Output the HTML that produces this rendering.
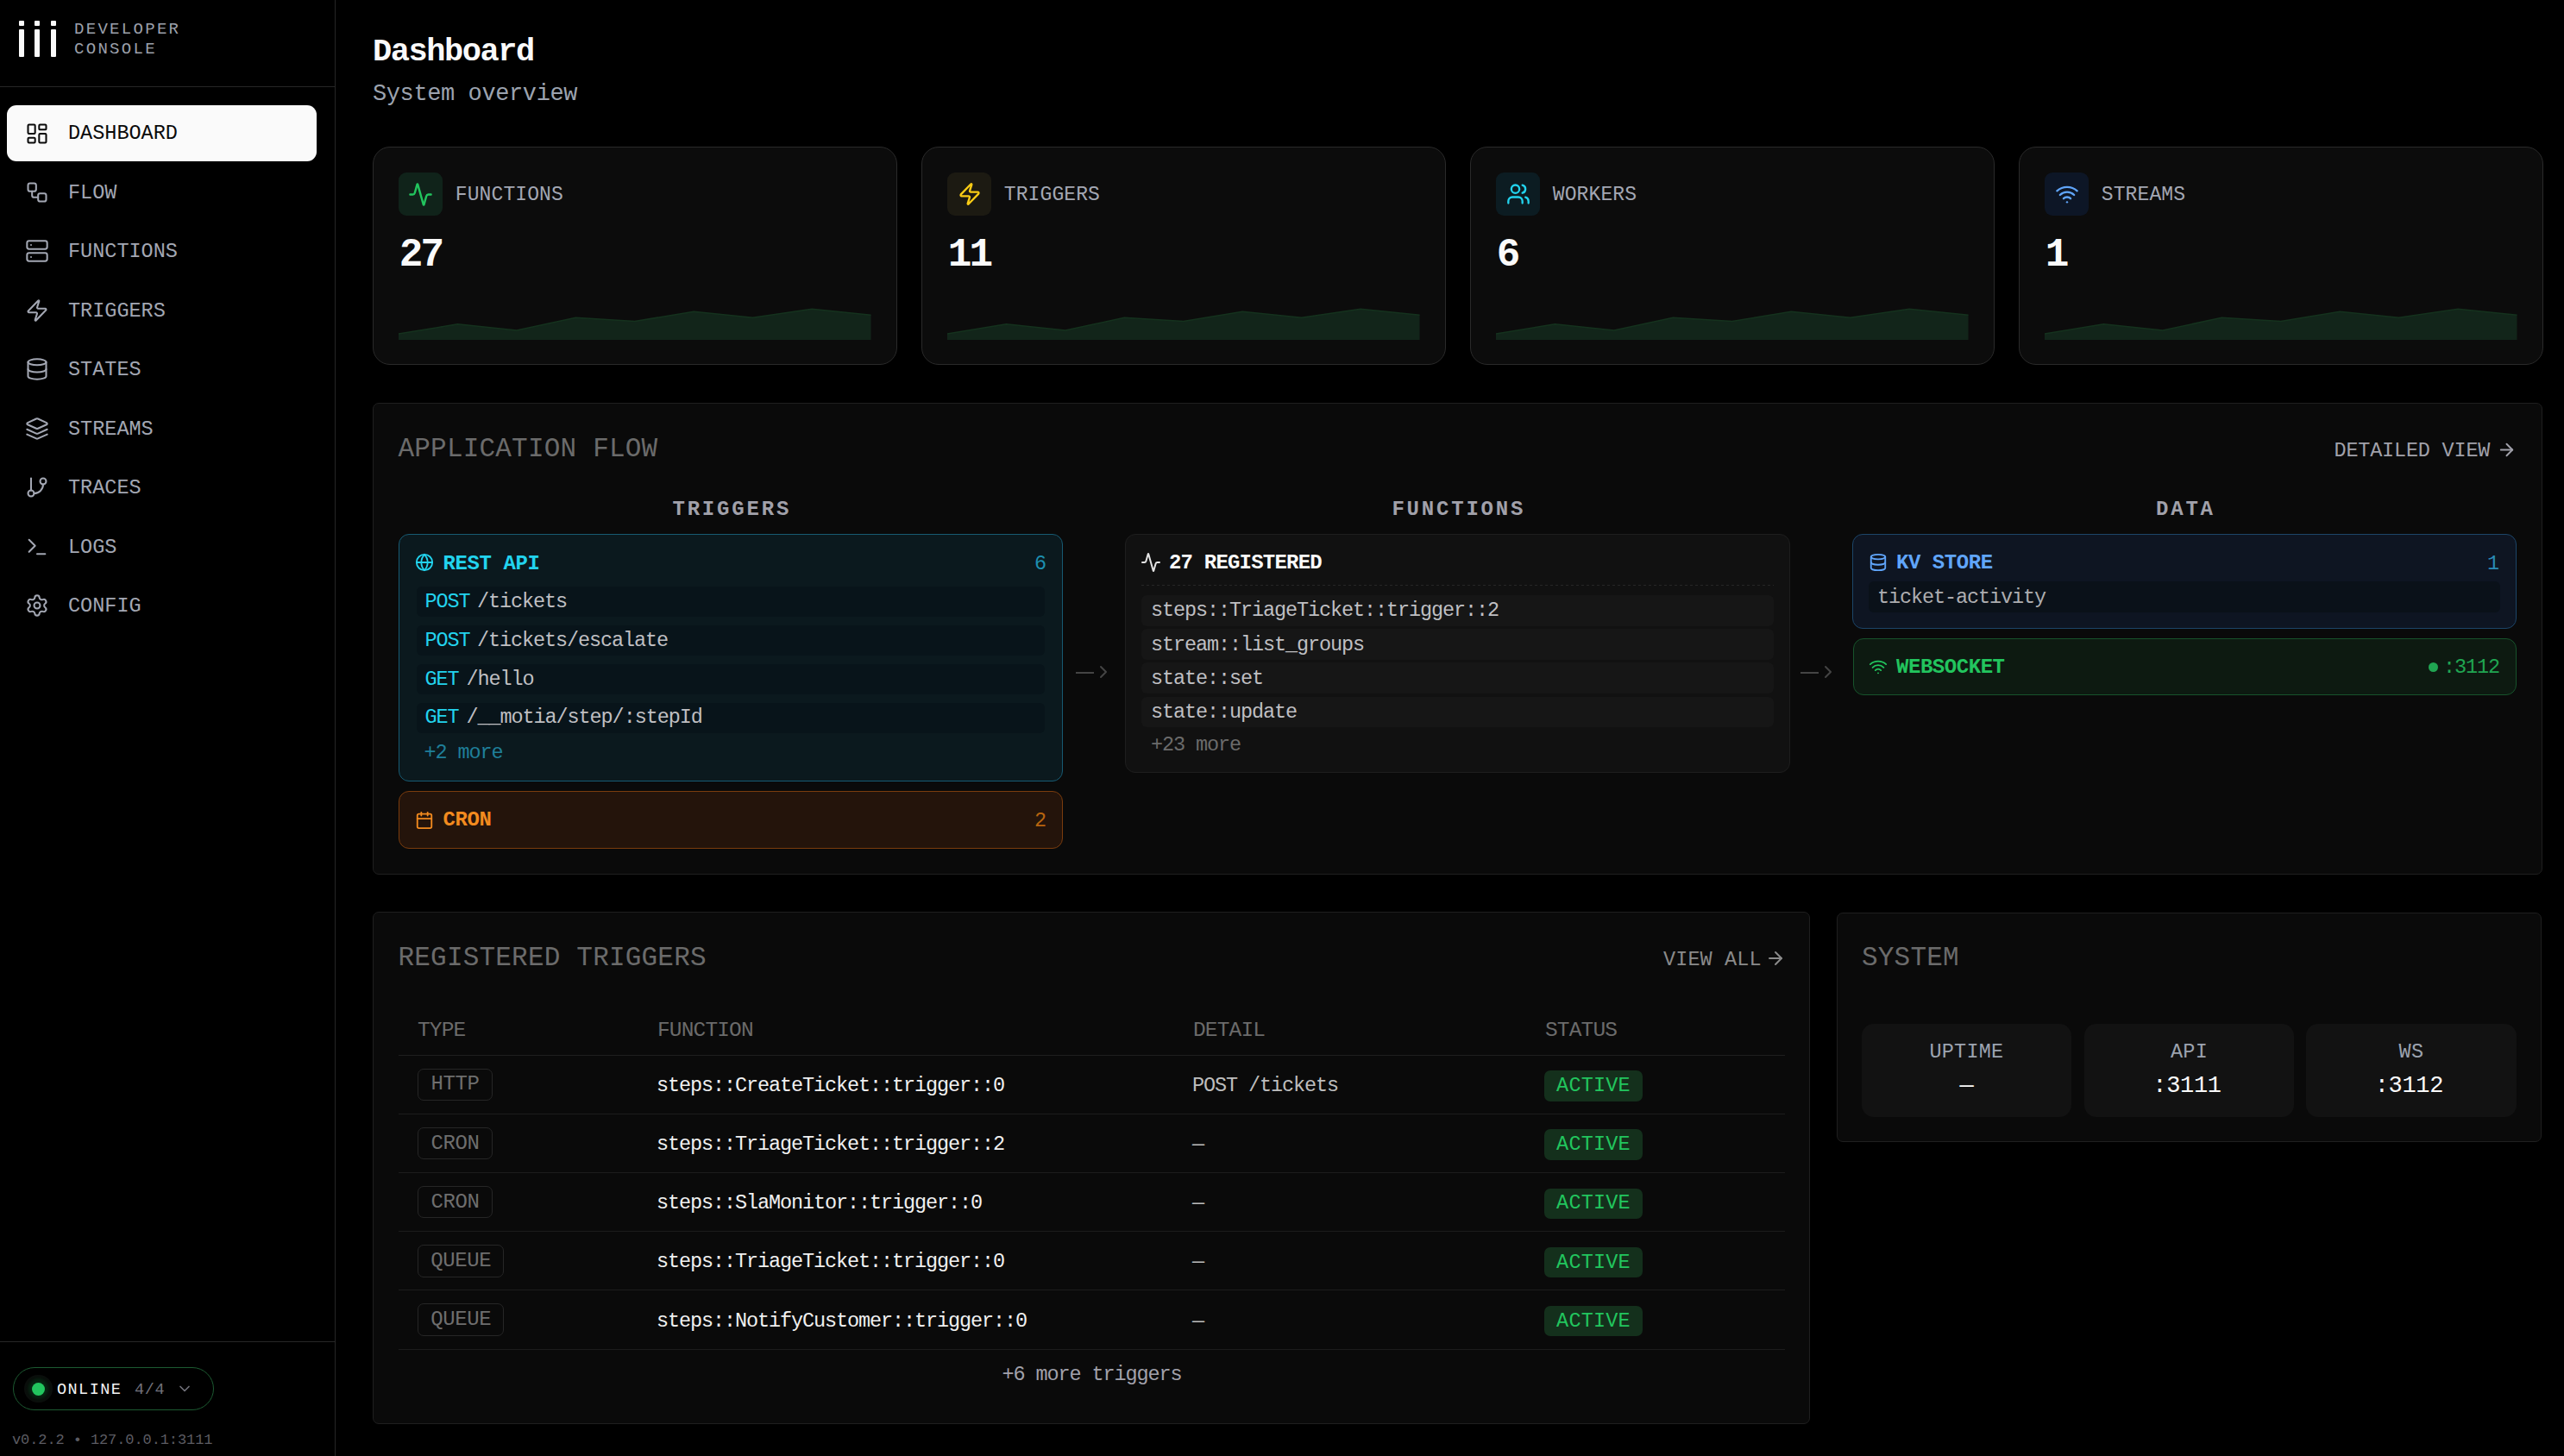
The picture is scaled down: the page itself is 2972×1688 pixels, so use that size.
<!DOCTYPE html>
<html><head><meta charset="utf-8"><style>
html,body{margin:0;padding:0;background:#000;}
body{width:2972px;height:1688px;position:relative;overflow:hidden;font-family:"Liberation Mono", monospace;}
.t{position:absolute;line-height:1;white-space:pre;}
.r{position:absolute;box-sizing:border-box;}
</style></head><body>
<div class="r" style="left:388.0px;top:0.0px;width:1.0px;height:1688.0px;background:#262626;"></div>
<div class="r" style="left:0.0px;top:100.0px;width:388.0px;height:1.0px;background:#262626;"></div>
<div class="r" style="left:22.0px;top:23.7px;width:6.3px;height:6.3px;background:#fafafa;border-radius:1px;"></div>
<div class="r" style="left:22.0px;top:34.3px;width:6.3px;height:31.3px;background:#fafafa;border-radius:1px;"></div>
<div class="r" style="left:40.1px;top:23.7px;width:6.3px;height:6.3px;background:#fafafa;border-radius:1px;"></div>
<div class="r" style="left:40.1px;top:34.3px;width:6.3px;height:31.3px;background:#fafafa;border-radius:1px;"></div>
<div class="r" style="left:59.0px;top:23.7px;width:6.3px;height:6.3px;background:#fafafa;border-radius:1px;"></div>
<div class="r" style="left:59.0px;top:34.3px;width:6.3px;height:31.3px;background:#fafafa;border-radius:1px;"></div>
<div class="t" style="left:86.0px;top:24.5px;font-size:19px;color:#9ca0ab;letter-spacing:2.3px;">DEVELOPER</div>
<div class="t" style="left:86.0px;top:47.5px;font-size:19px;color:#9ca0ab;letter-spacing:2.3px;">CONSOLE</div>
<div class="r" style="left:8.0px;top:122.0px;width:359.0px;height:65.0px;background:#fafafa;border-radius:11px;"></div>
<svg class="r" style="left:28.9px;top:140.5px;" width="28" height="28" viewBox="0 0 24 24" fill="none" stroke="#0a0a0a" stroke-width="1.75" stroke-linecap="round" stroke-linejoin="round"><rect width="7" height="9" x="3" y="3" rx="1"/><rect width="7" height="5" x="14" y="3" rx="1"/><rect width="7" height="9" x="14" y="12" rx="1"/><rect width="7" height="5" x="3" y="16" rx="1"/></svg>
<div class="t" style="left:79.0px;top:143.4px;font-size:23.5px;color:#0a0a0a;">DASHBOARD</div>
<svg class="r" style="left:28.9px;top:208.9px;" width="28" height="28" viewBox="0 0 24 24" fill="none" stroke="#a3a7b3" stroke-width="1.75" stroke-linecap="round" stroke-linejoin="round"><rect width="8" height="8" x="3" y="3" rx="2"/><path d="M7 11v4a2 2 0 0 0 2 2h4"/><rect width="8" height="8" x="13" y="13" rx="2"/></svg>
<div class="t" style="left:79.0px;top:211.8px;font-size:23.5px;color:#a3a7b3;">FLOW</div>
<svg class="r" style="left:28.9px;top:277.4px;" width="28" height="28" viewBox="0 0 24 24" fill="none" stroke="#a3a7b3" stroke-width="1.75" stroke-linecap="round" stroke-linejoin="round"><rect width="20" height="8" x="2" y="2" rx="2" ry="2"/><rect width="20" height="8" x="2" y="14" rx="2" ry="2"/><line x1="6" x2="6.01" y1="6" y2="6"/><line x1="6" x2="6.01" y1="18" y2="18"/></svg>
<div class="t" style="left:79.0px;top:280.3px;font-size:23.5px;color:#a3a7b3;">FUNCTIONS</div>
<svg class="r" style="left:28.9px;top:345.9px;" width="28" height="28" viewBox="0 0 24 24" fill="none" stroke="#a3a7b3" stroke-width="1.75" stroke-linecap="round" stroke-linejoin="round"><path d="M4 14a1 1 0 0 1-.78-1.63l9.9-10.2a.5.5 0 0 1 .86.46l-1.92 6.02A1 1 0 0 0 13 10h7a1 1 0 0 1 .78 1.63l-9.9 10.2a.5.5 0 0 1-.86-.46l1.92-6.02A1 1 0 0 0 11 14z"/></svg>
<div class="t" style="left:79.0px;top:348.7px;font-size:23.5px;color:#a3a7b3;">TRIGGERS</div>
<svg class="r" style="left:28.9px;top:414.3px;" width="28" height="28" viewBox="0 0 24 24" fill="none" stroke="#a3a7b3" stroke-width="1.75" stroke-linecap="round" stroke-linejoin="round"><ellipse cx="12" cy="5" rx="9" ry="3"/><path d="M3 5V19A9 3 0 0 0 21 19V5"/><path d="M3 12A9 3 0 0 0 21 12"/></svg>
<div class="t" style="left:79.0px;top:417.2px;font-size:23.5px;color:#a3a7b3;">STATES</div>
<svg class="r" style="left:28.9px;top:482.8px;" width="28" height="28" viewBox="0 0 24 24" fill="none" stroke="#a3a7b3" stroke-width="1.75" stroke-linecap="round" stroke-linejoin="round"><path d="m12.83 2.18a2 2 0 0 0-1.66 0L2.6 6.08a1 1 0 0 0 0 1.83l8.58 3.91a2 2 0 0 0 1.66 0l8.58-3.9a1 1 0 0 0 0-1.83Z"/><path d="m22 17.65-9.17 4.16a2 2 0 0 1-1.66 0L2 17.65"/><path d="m22 12.65-9.17 4.16a2 2 0 0 1-1.66 0L2 12.65"/></svg>
<div class="t" style="left:79.0px;top:485.6px;font-size:23.5px;color:#a3a7b3;">STREAMS</div>
<svg class="r" style="left:28.9px;top:551.2px;" width="28" height="28" viewBox="0 0 24 24" fill="none" stroke="#a3a7b3" stroke-width="1.75" stroke-linecap="round" stroke-linejoin="round"><line x1="6" x2="6" y1="3" y2="15"/><circle cx="18" cy="6" r="3"/><circle cx="6" cy="18" r="3"/><path d="M18 9a9 9 0 0 1-9 9"/></svg>
<div class="t" style="left:79.0px;top:554.1px;font-size:23.5px;color:#a3a7b3;">TRACES</div>
<svg class="r" style="left:28.9px;top:619.7px;" width="28" height="28" viewBox="0 0 24 24" fill="none" stroke="#a3a7b3" stroke-width="1.75" stroke-linecap="round" stroke-linejoin="round"><polyline points="4 17 10 11 4 5"/><line x1="12" x2="20" y1="19" y2="19"/></svg>
<div class="t" style="left:79.0px;top:622.5px;font-size:23.5px;color:#a3a7b3;">LOGS</div>
<svg class="r" style="left:28.9px;top:688.1px;" width="28" height="28" viewBox="0 0 24 24" fill="none" stroke="#a3a7b3" stroke-width="1.75" stroke-linecap="round" stroke-linejoin="round"><path d="M9.671 4.136a2.34 2.34 0 0 1 4.659 0 2.34 2.34 0 0 0 3.319 1.915 2.34 2.34 0 0 1 2.33 4.033 2.34 2.34 0 0 0 0 3.831 2.34 2.34 0 0 1-2.33 4.033 2.34 2.34 0 0 0-3.319 1.915 2.34 2.34 0 0 1-4.659 0 2.34 2.34 0 0 0-3.32-1.915 2.34 2.34 0 0 1-2.33-4.033 2.34 2.34 0 0 0 0-3.831A2.34 2.34 0 0 1 6.35 6.051a2.34 2.34 0 0 0 3.319-1.915"/><circle cx="12" cy="12" r="3"/></svg>
<div class="t" style="left:79.0px;top:691.0px;font-size:23.5px;color:#a3a7b3;">CONFIG</div>
<div class="r" style="left:0.0px;top:1555.0px;width:388.0px;height:1.0px;background:#262626;"></div>
<div class="r" style="left:15.0px;top:1585.0px;width:233.0px;height:50.0px;border:1px solid #1c5a31;border-radius:25px;"></div>
<div class="r" style="left:28.3px;top:1593.8px;width:32.4px;height:32.4px;background:radial-gradient(circle, rgba(34,197,94,0.18) 0 40%, rgba(30,60,40,0.25) 58%, rgba(24,24,24,0.5) 78%, rgba(0,0,0,0) 100%);border-radius:50%;"></div>
<div class="r" style="left:37.0px;top:1602.5px;width:15.0px;height:15.0px;background:#22c55e;border-radius:50%;"></div>
<div class="t" style="left:66.0px;top:1602.8px;font-size:18.5px;color:#f4f4f5;letter-spacing:1.45px;">ONLINE</div>
<div class="t" style="left:156.0px;top:1602.8px;font-size:18.5px;color:#71717a;letter-spacing:0.65px;">4/4</div>
<svg class="r" style="left:203.7px;top:1600.0px;" width="20" height="20" viewBox="0 0 24 24" fill="none" stroke="#71717a" stroke-width="2" stroke-linecap="round" stroke-linejoin="round"><path d="m6 9 6 6 6-6"/></svg>
<div class="t" style="left:14.0px;top:1660.7px;font-size:17px;color:#5c5c63;letter-spacing:-0.1px;">v0.2.2 • 127.0.0.1:3111</div>
<div class="t" style="left:432.0px;top:41.9px;font-size:37px;color:#fafafa;letter-spacing:-1.45px;font-weight:700;">Dashboard</div>
<div class="t" style="left:432.0px;top:96.3px;font-size:27px;color:#9ca3af;letter-spacing:-0.4px;">System overview</div>
<div class="r" style="left:432.0px;top:169.6px;width:607.5px;height:253.8px;background:#0c0c0c;border:1px solid #2a2a2a;border-radius:20px;"></div>
<div class="r" style="left:462.3px;top:200.0px;width:50.6px;height:50.0px;background:#10231a;border-radius:9px;"></div>
<svg class="r" style="left:473.1px;top:210.8px;" width="29" height="29" viewBox="0 0 24 24" fill="none" stroke="#22c55e" stroke-width="2" stroke-linecap="round" stroke-linejoin="round"><path d="M22 12h-2.48a2 2 0 0 0-1.93 1.46l-2.35 8.36a.25.25 0 0 1-.48 0L9.24 2.18a.25.25 0 0 0-.48 0l-2.35 8.36A2 2 0 0 1 4.49 12H2"/></svg>
<div class="t" style="left:527.8px;top:214.5px;font-size:23px;color:#a3a7b3;letter-spacing:0.1px;">FUNCTIONS</div>
<div class="t" style="left:462.8px;top:272.8px;font-size:46px;color:#fafafa;letter-spacing:-3px;font-weight:700;">27</div>
<svg class="r" style="left:462.3px;top:353.8px" width="547.5" height="40" viewBox="0 0 547.5 40"><polygon points="0,40 0.0,33.0 68.4,21.8 136.9,29.1 205.3,14.2 273.8,18.5 342.2,7.3 410.6,14.2 479.1,4.3 547.5,11.2 547.5,40" fill="#12251a"/><polyline points="0.0,33.0 68.4,21.8 136.9,29.1 205.3,14.2 273.8,18.5 342.2,7.3 410.6,14.2 479.1,4.3 547.5,11.2" fill="none" stroke="#15321e" stroke-width="1.5"/></svg>
<div class="r" style="left:1068.0px;top:169.6px;width:607.5px;height:253.8px;background:#0c0c0c;border:1px solid #2a2a2a;border-radius:20px;"></div>
<div class="r" style="left:1098.3px;top:200.0px;width:50.6px;height:50.0px;background:#1c1a12;border-radius:9px;"></div>
<svg class="r" style="left:1109.6px;top:211.3px;" width="28" height="28" viewBox="0 0 24 24" fill="none" stroke="#facc15" stroke-width="2" stroke-linecap="round" stroke-linejoin="round"><path d="M4 14a1 1 0 0 1-.78-1.63l9.9-10.2a.5.5 0 0 1 .86.46l-1.92 6.02A1 1 0 0 0 13 10h7a1 1 0 0 1 .78 1.63l-9.9 10.2a.5.5 0 0 1-.86-.46l1.92-6.02A1 1 0 0 0 11 14z"/></svg>
<div class="t" style="left:1163.8px;top:214.5px;font-size:23px;color:#a3a7b3;letter-spacing:0.1px;">TRIGGERS</div>
<div class="t" style="left:1098.8px;top:272.8px;font-size:46px;color:#fafafa;letter-spacing:-3px;font-weight:700;">11</div>
<svg class="r" style="left:1098.3px;top:353.8px" width="547.5" height="40" viewBox="0 0 547.5 40"><polygon points="0,40 0.0,33.0 68.4,21.8 136.9,29.1 205.3,14.2 273.8,18.5 342.2,7.3 410.6,14.2 479.1,4.3 547.5,11.2 547.5,40" fill="#12251a"/><polyline points="0.0,33.0 68.4,21.8 136.9,29.1 205.3,14.2 273.8,18.5 342.2,7.3 410.6,14.2 479.1,4.3 547.5,11.2" fill="none" stroke="#15321e" stroke-width="1.5"/></svg>
<div class="r" style="left:1704.0px;top:169.6px;width:607.5px;height:253.8px;background:#0c0c0c;border:1px solid #2a2a2a;border-radius:20px;"></div>
<div class="r" style="left:1734.3px;top:200.0px;width:50.6px;height:50.0px;background:#0c1c22;border-radius:9px;"></div>
<svg class="r" style="left:1745.6px;top:211.3px;" width="28" height="28" viewBox="0 0 24 24" fill="none" stroke="#22d3ee" stroke-width="2" stroke-linecap="round" stroke-linejoin="round"><path d="M16 21v-2a4 4 0 0 0-4-4H6a4 4 0 0 0-4 4v2"/><circle cx="9" cy="7" r="4"/><path d="M22 21v-2a4 4 0 0 0-3-3.87"/><path d="M16 3.13a4 4 0 0 1 0 7.75"/></svg>
<div class="t" style="left:1799.8px;top:214.5px;font-size:23px;color:#a3a7b3;letter-spacing:0.1px;">WORKERS</div>
<div class="t" style="left:1734.8px;top:272.8px;font-size:46px;color:#fafafa;letter-spacing:-3px;font-weight:700;">6</div>
<svg class="r" style="left:1734.3px;top:353.8px" width="547.5" height="40" viewBox="0 0 547.5 40"><polygon points="0,40 0.0,33.0 68.4,21.8 136.9,29.1 205.3,14.2 273.8,18.5 342.2,7.3 410.6,14.2 479.1,4.3 547.5,11.2 547.5,40" fill="#12251a"/><polyline points="0.0,33.0 68.4,21.8 136.9,29.1 205.3,14.2 273.8,18.5 342.2,7.3 410.6,14.2 479.1,4.3 547.5,11.2" fill="none" stroke="#15321e" stroke-width="1.5"/></svg>
<div class="r" style="left:2340.0px;top:169.6px;width:607.5px;height:253.8px;background:#0c0c0c;border:1px solid #2a2a2a;border-radius:20px;"></div>
<div class="r" style="left:2370.3px;top:200.0px;width:50.6px;height:50.0px;background:#0d1626;border-radius:9px;"></div>
<svg class="r" style="left:2381.6px;top:211.3px;" width="28" height="28" viewBox="0 0 24 24" fill="none" stroke="#60a5fa" stroke-width="2" stroke-linecap="round" stroke-linejoin="round"><path d="M12 20h.01"/><path d="M2 8.82a15 15 0 0 1 20 0"/><path d="M5 12.859a10 10 0 0 1 14 0"/><path d="M8.5 16.429a5 5 0 0 1 7 0"/></svg>
<div class="t" style="left:2435.8px;top:214.5px;font-size:23px;color:#a3a7b3;letter-spacing:0.1px;">STREAMS</div>
<div class="t" style="left:2370.8px;top:272.8px;font-size:46px;color:#fafafa;letter-spacing:-3px;font-weight:700;">1</div>
<svg class="r" style="left:2370.3px;top:353.8px" width="547.5" height="40" viewBox="0 0 547.5 40"><polygon points="0,40 0.0,33.0 68.4,21.8 136.9,29.1 205.3,14.2 273.8,18.5 342.2,7.3 410.6,14.2 479.1,4.3 547.5,11.2 547.5,40" fill="#12251a"/><polyline points="0.0,33.0 68.4,21.8 136.9,29.1 205.3,14.2 273.8,18.5 342.2,7.3 410.6,14.2 479.1,4.3 547.5,11.2" fill="none" stroke="#15321e" stroke-width="1.5"/></svg>
<div class="r" style="left:432.4px;top:467.2px;width:2514.6px;height:546.8px;background:#0a0a0a;border:1px solid #1f1f1f;border-radius:7px;"></div>
<div class="t" style="left:461.5px;top:504.5px;font-size:31px;color:#6b6b6b;letter-spacing:0.2px;">APPLICATION FLOW</div>
<div class="t" style="left:2705.5px;top:511.3px;font-size:23.5px;color:#a1a1aa;letter-spacing:-0.2px;">DETAILED VIEW</div>
<svg class="r" style="left:2894.2px;top:510.1px;" width="23" height="23" viewBox="0 0 24 24" fill="none" stroke="#a1a1aa" stroke-width="2" stroke-linecap="round" stroke-linejoin="round"><path d="M5 12h14"/><path d="m12 5 7 7-7 7"/></svg>
<div class="t" style="left:346.9px;top:579.1px;font-size:24px;color:#a1a1aa;letter-spacing:2.8px;font-weight:700;width:1000px;text-align:center;text-indent:2.8px;">TRIGGERS</div>
<div class="t" style="left:1189.4px;top:579.1px;font-size:24px;color:#a1a1aa;letter-spacing:2.8px;font-weight:700;width:1000px;text-align:center;text-indent:2.8px;">FUNCTIONS</div>
<div class="t" style="left:2032.0px;top:579.1px;font-size:24px;color:#a1a1aa;letter-spacing:2.8px;font-weight:700;width:1000px;text-align:center;text-indent:2.8px;">DATA</div>
<div class="r" style="left:461.8px;top:618.5px;width:770.1px;height:287.2px;background:#0b191e;border:1px solid #175a72;border-radius:12px;"></div>
<svg class="r" style="left:481.0px;top:641.4px;" width="22" height="22" viewBox="0 0 24 24" fill="none" stroke="#22d3ee" stroke-width="2" stroke-linecap="round" stroke-linejoin="round"><circle cx="12" cy="12" r="10"/><path d="M12 2a14.5 14.5 0 0 0 0 20 14.5 14.5 0 0 0 0-20"/><path d="M2 12h20"/></svg>
<div class="t" style="left:513.5px;top:641.8px;font-size:24px;color:#22d3ee;letter-spacing:-0.4px;font-weight:700;">REST API</div>
<div class="t" style="right:1759.0px;top:642.2px;font-size:23.5px;color:#1d8fb0;">6</div>
<div class="r" style="left:482.6px;top:680.0px;width:728.4px;height:35.0px;background:#08141a;border-radius:6px;"></div>
<div class="t" style="left:492.5px;top:685.6px;font-size:23.5px;color:#22d3ee;letter-spacing:-1.1px;">POST</div>
<div class="t" style="left:553.0px;top:685.6px;font-size:23.5px;color:#bfbfc2;letter-spacing:-1.1px;">/tickets</div>
<div class="r" style="left:482.6px;top:724.9px;width:728.4px;height:35.0px;background:#08141a;border-radius:6px;"></div>
<div class="t" style="left:492.5px;top:730.5px;font-size:23.5px;color:#22d3ee;letter-spacing:-1.1px;">POST</div>
<div class="t" style="left:553.0px;top:730.5px;font-size:23.5px;color:#bfbfc2;letter-spacing:-1.1px;">/tickets/escalate</div>
<div class="r" style="left:482.6px;top:769.9px;width:728.4px;height:35.0px;background:#08141a;border-radius:6px;"></div>
<div class="t" style="left:492.5px;top:775.5px;font-size:23.5px;color:#22d3ee;letter-spacing:-1.1px;">GET</div>
<div class="t" style="left:540.6px;top:775.5px;font-size:23.5px;color:#bfbfc2;letter-spacing:-1.1px;">/hello</div>
<div class="r" style="left:482.6px;top:814.8px;width:728.4px;height:35.0px;background:#08141a;border-radius:6px;"></div>
<div class="t" style="left:492.5px;top:820.4px;font-size:23.5px;color:#22d3ee;letter-spacing:-1.1px;">GET</div>
<div class="t" style="left:540.6px;top:820.4px;font-size:23.5px;color:#bfbfc2;letter-spacing:-1.1px;">/__motia/step/:stepId</div>
<div class="t" style="left:491.5px;top:861.4px;font-size:23.5px;color:#1f7f99;letter-spacing:-1.1px;">+2 more</div>
<div class="r" style="left:461.8px;top:916.5px;width:770.1px;height:67.0px;background:#24140b;border:1px solid #7a3c0d;border-radius:12px;"></div>
<svg class="r" style="left:481.0px;top:939.5px;" width="22" height="22" viewBox="0 0 24 24" fill="none" stroke="#f38b1f" stroke-width="2" stroke-linecap="round" stroke-linejoin="round"><path d="M8 2v4"/><path d="M16 2v4"/><rect width="18" height="18" x="3" y="4" rx="2"/><path d="M3 10h18"/></svg>
<div class="t" style="left:513.5px;top:939.3px;font-size:24px;color:#f38b1f;letter-spacing:-0.4px;font-weight:700;">CRON</div>
<div class="t" style="right:1759.0px;top:939.7px;font-size:23.5px;color:#b8650f;">2</div>
<div class="r" style="left:1247.0px;top:779.0px;width:21.0px;height:2.0px;background:#444;"></div>
<svg class="r" style="left:1267.4px;top:767.4px;" width="24" height="24" viewBox="0 0 24 24" fill="none" stroke="#444" stroke-width="2" stroke-linecap="round" stroke-linejoin="round"><path d="m9 6 6 6-6 6"/></svg>
<div class="r" style="left:2087.0px;top:779.0px;width:21.0px;height:2.0px;background:#444;"></div>
<svg class="r" style="left:2107.4px;top:767.4px;" width="24" height="24" viewBox="0 0 24 24" fill="none" stroke="#444" stroke-width="2" stroke-linecap="round" stroke-linejoin="round"><path d="m9 6 6 6-6 6"/></svg>
<div class="r" style="left:1303.9px;top:618.9px;width:770.8px;height:276.9px;background:#111111;border:1px solid #1e1e1e;border-radius:12px;"></div>
<svg class="r" style="left:1322.3px;top:639.5px;" width="24" height="24" viewBox="0 0 24 24" fill="none" stroke="#e5e5e5" stroke-width="2" stroke-linecap="round" stroke-linejoin="round"><path d="M22 12h-2.48a2 2 0 0 0-1.93 1.46l-2.35 8.36a.25.25 0 0 1-.48 0L9.24 2.18a.25.25 0 0 0-.48 0l-2.35 8.36A2 2 0 0 1 4.49 12H2"/></svg>
<div class="t" style="left:1355.0px;top:641.0px;font-size:24px;color:#fafafa;letter-spacing:-0.8px;font-weight:700;">27 REGISTERED</div>
<div class="r" style="left:1323.3px;top:677.5px;width:733.0px;height:1.2px;background:repeating-linear-gradient(90deg,#262626 0 3px,transparent 3px 6px);"></div>
<div class="r" style="left:1323.3px;top:690.0px;width:733.0px;height:35.5px;background:#161616;border-radius:6px;"></div>
<div class="t" style="left:1334.0px;top:696.4px;font-size:23.5px;color:#bfbfc2;letter-spacing:-1.1px;">steps::TriageTicket::trigger::2</div>
<div class="r" style="left:1323.3px;top:729.2px;width:733.0px;height:35.5px;background:#161616;border-radius:6px;"></div>
<div class="t" style="left:1334.0px;top:735.6px;font-size:23.5px;color:#bfbfc2;letter-spacing:-1.1px;">stream::list_groups</div>
<div class="r" style="left:1323.3px;top:768.4px;width:733.0px;height:35.5px;background:#161616;border-radius:6px;"></div>
<div class="t" style="left:1334.0px;top:774.8px;font-size:23.5px;color:#bfbfc2;letter-spacing:-1.1px;">state::set</div>
<div class="r" style="left:1323.3px;top:807.6px;width:733.0px;height:35.5px;background:#161616;border-radius:6px;"></div>
<div class="t" style="left:1334.0px;top:814.0px;font-size:23.5px;color:#bfbfc2;letter-spacing:-1.1px;">state::update</div>
<div class="t" style="left:1334.0px;top:851.5px;font-size:23.5px;color:#6b6b6b;letter-spacing:-1.1px;">+23 more</div>
<div class="r" style="left:2147.0px;top:619.0px;width:770.1px;height:110.0px;background:#0e1522;border:1px solid #1c4568;border-radius:12px;"></div>
<svg class="r" style="left:2165.5px;top:641.0px;" width="22" height="22" viewBox="0 0 24 24" fill="none" stroke="#60a5fa" stroke-width="2" stroke-linecap="round" stroke-linejoin="round"><ellipse cx="12" cy="5" rx="9" ry="3"/><path d="M3 5V19A9 3 0 0 0 21 19V5"/><path d="M3 12A9 3 0 0 0 21 12"/></svg>
<div class="t" style="left:2198.0px;top:641.2px;font-size:24px;color:#60a5fa;letter-spacing:-0.45px;font-weight:700;">KV STORE</div>
<div class="t" style="right:75.0px;top:641.6px;font-size:23.5px;color:#2a8ab5;">1</div>
<div class="r" style="left:2166.0px;top:673.8px;width:731.8px;height:36.2px;background:#0a1119;border-radius:6px;"></div>
<div class="t" style="left:2176.0px;top:680.8px;font-size:23.5px;color:#adadb0;letter-spacing:-1.1px;">ticket-activity</div>
<div class="r" style="left:2147.5px;top:740.4px;width:769.1px;height:65.8px;background:#0d1a11;border:1px solid #17532b;border-radius:12px;"></div>
<svg class="r" style="left:2165.5px;top:762.0px;" width="22" height="22" viewBox="0 0 24 24" fill="none" stroke="#22c55e" stroke-width="2" stroke-linecap="round" stroke-linejoin="round"><path d="M12 20h.01"/><path d="M2 8.82a15 15 0 0 1 20 0"/><path d="M5 12.859a10 10 0 0 1 14 0"/><path d="M8.5 16.429a5 5 0 0 1 7 0"/></svg>
<div class="t" style="left:2198.0px;top:761.6px;font-size:24px;color:#22c55e;letter-spacing:-0.45px;font-weight:700;">WEBSOCKET</div>
<div class="r" style="left:2814.7px;top:768.1px;width:11.2px;height:11.2px;background:#20a552;border-radius:50%;"></div>
<div class="t" style="right:75.0px;top:762.0px;font-size:23.5px;color:#20a552;letter-spacing:-1.1px;">:3112</div>
<div class="r" style="left:432.4px;top:1057.2px;width:1666.1px;height:594.0px;background:#0a0a0a;border:1px solid #1f1f1f;border-radius:7px;"></div>
<div class="t" style="left:461.5px;top:1094.6px;font-size:31px;color:#6b6b6b;letter-spacing:0.2px;">REGISTERED TRIGGERS</div>
<div class="t" style="left:1928.0px;top:1100.6px;font-size:23.5px;color:#8a8a8a;letter-spacing:0.1px;">VIEW ALL</div>
<svg class="r" style="left:2046.2px;top:1099.0px;" width="24" height="24" viewBox="0 0 24 24" fill="none" stroke="#8a8a8a" stroke-width="2" stroke-linecap="round" stroke-linejoin="round"><path d="M5 12h14"/><path d="m12 5 7 7-7 7"/></svg>
<div class="t" style="left:484.0px;top:1182.5px;font-size:24.5px;color:#6b6b6b;letter-spacing:-0.85px;">TYPE</div>
<div class="t" style="left:762.0px;top:1182.5px;font-size:24.5px;color:#6b6b6b;letter-spacing:-0.85px;">FUNCTION</div>
<div class="t" style="left:1383.0px;top:1182.5px;font-size:24.5px;color:#6b6b6b;letter-spacing:-0.85px;">DETAIL</div>
<div class="t" style="left:1791.0px;top:1182.5px;font-size:24.5px;color:#6b6b6b;letter-spacing:-0.85px;">STATUS</div>
<div class="r" style="left:461.9px;top:1222.8px;width:1607.1px;height:1.5px;background:#1f1f1f;"></div>
<div class="r" style="left:484.2px;top:1238.7px;width:86.5px;height:37.4px;border:1px solid #262626;border-radius:7px;"></div>
<div class="t" style="left:484.2px;top:1245.4px;width:86.5px;text-align:center;font-size:24px;line-height:24px;color:#6e6e6e;letter-spacing:-0.4px">HTTP</div>
<div class="t" style="left:761.0px;top:1246.9px;font-size:23.5px;color:#f0f0f0;letter-spacing:-1.1px;">steps::CreateTicket::trigger::0</div>
<div class="t" style="left:1382.0px;top:1246.9px;font-size:23.5px;color:#bdbdbd;letter-spacing:-1.1px;">POST /tickets</div>
<div class="r" style="left:1790.2px;top:1241.2px;width:113.7px;height:35.4px;background:#14301c;border-radius:7px;"></div>
<div class="t" style="left:1790.2px;top:1247.1px;width:113.7px;text-align:center;font-size:23.5px;line-height:24px;color:#22c55e;letter-spacing:0.2px">ACTIVE</div>
<div class="r" style="left:461.9px;top:1291.0px;width:1607.1px;height:1.0px;background:#1c1c1c;"></div>
<div class="r" style="left:484.2px;top:1306.8px;width:86.5px;height:37.4px;border:1px solid #262626;border-radius:7px;"></div>
<div class="t" style="left:484.2px;top:1313.5px;width:86.5px;text-align:center;font-size:24px;line-height:24px;color:#6e6e6e;letter-spacing:-0.4px">CRON</div>
<div class="t" style="left:761.0px;top:1315.0px;font-size:23.5px;color:#f0f0f0;letter-spacing:-1.1px;">steps::TriageTicket::trigger::2</div>
<div class="t" style="left:1382.0px;top:1315.0px;font-size:23.5px;color:#bdbdbd;letter-spacing:-1.1px;">—</div>
<div class="r" style="left:1790.2px;top:1309.3px;width:113.7px;height:35.4px;background:#14301c;border-radius:7px;"></div>
<div class="t" style="left:1790.2px;top:1315.2px;width:113.7px;text-align:center;font-size:23.5px;line-height:24px;color:#22c55e;letter-spacing:0.2px">ACTIVE</div>
<div class="r" style="left:461.9px;top:1359.1px;width:1607.1px;height:1.0px;background:#1c1c1c;"></div>
<div class="r" style="left:484.2px;top:1375.0px;width:86.5px;height:37.4px;border:1px solid #262626;border-radius:7px;"></div>
<div class="t" style="left:484.2px;top:1381.7px;width:86.5px;text-align:center;font-size:24px;line-height:24px;color:#6e6e6e;letter-spacing:-0.4px">CRON</div>
<div class="t" style="left:761.0px;top:1383.2px;font-size:23.5px;color:#f0f0f0;letter-spacing:-1.1px;">steps::SlaMonitor::trigger::0</div>
<div class="t" style="left:1382.0px;top:1383.2px;font-size:23.5px;color:#bdbdbd;letter-spacing:-1.1px;">—</div>
<div class="r" style="left:1790.2px;top:1377.5px;width:113.7px;height:35.4px;background:#14301c;border-radius:7px;"></div>
<div class="t" style="left:1790.2px;top:1383.4px;width:113.7px;text-align:center;font-size:23.5px;line-height:24px;color:#22c55e;letter-spacing:0.2px">ACTIVE</div>
<div class="r" style="left:461.9px;top:1427.3px;width:1607.1px;height:1.0px;background:#1c1c1c;"></div>
<div class="r" style="left:484.2px;top:1443.2px;width:100.3px;height:37.4px;border:1px solid #262626;border-radius:7px;"></div>
<div class="t" style="left:484.2px;top:1449.9px;width:100.3px;text-align:center;font-size:24px;line-height:24px;color:#6e6e6e;letter-spacing:-0.4px">QUEUE</div>
<div class="t" style="left:761.0px;top:1451.4px;font-size:23.5px;color:#f0f0f0;letter-spacing:-1.1px;">steps::TriageTicket::trigger::0</div>
<div class="t" style="left:1382.0px;top:1451.4px;font-size:23.5px;color:#bdbdbd;letter-spacing:-1.1px;">—</div>
<div class="r" style="left:1790.2px;top:1445.7px;width:113.7px;height:35.4px;background:#14301c;border-radius:7px;"></div>
<div class="t" style="left:1790.2px;top:1451.6px;width:113.7px;text-align:center;font-size:23.5px;line-height:24px;color:#22c55e;letter-spacing:0.2px">ACTIVE</div>
<div class="r" style="left:461.9px;top:1495.4px;width:1607.1px;height:1.0px;background:#1c1c1c;"></div>
<div class="r" style="left:484.2px;top:1511.3px;width:100.3px;height:37.4px;border:1px solid #262626;border-radius:7px;"></div>
<div class="t" style="left:484.2px;top:1518.0px;width:100.3px;text-align:center;font-size:24px;line-height:24px;color:#6e6e6e;letter-spacing:-0.4px">QUEUE</div>
<div class="t" style="left:761.0px;top:1519.5px;font-size:23.5px;color:#f0f0f0;letter-spacing:-1.1px;">steps::NotifyCustomer::trigger::0</div>
<div class="t" style="left:1382.0px;top:1519.5px;font-size:23.5px;color:#bdbdbd;letter-spacing:-1.1px;">—</div>
<div class="r" style="left:1790.2px;top:1513.8px;width:113.7px;height:35.4px;background:#14301c;border-radius:7px;"></div>
<div class="t" style="left:1790.2px;top:1519.7px;width:113.7px;text-align:center;font-size:23.5px;line-height:24px;color:#22c55e;letter-spacing:0.2px">ACTIVE</div>
<div class="r" style="left:461.9px;top:1563.6px;width:1607.1px;height:1.0px;background:#1c1c1c;"></div>
<div class="t" style="left:765.5px;top:1582.0px;font-size:23.5px;color:#a1a1aa;letter-spacing:-1.1px;width:1000px;text-align:center;">+6 more triggers</div>
<div class="r" style="left:2128.5px;top:1057.5px;width:817.9px;height:266.6px;background:#0a0a0a;border:1px solid #1f1f1f;border-radius:7px;"></div>
<div class="t" style="left:2158.0px;top:1094.6px;font-size:31px;color:#6b6b6b;letter-spacing:0.2px;">SYSTEM</div>
<div class="r" style="left:2158.0px;top:1187.0px;width:242.8px;height:107.5px;background:#121212;border-radius:14px;"></div>
<div class="t" style="left:1779.4px;top:1207.9px;font-size:23.5px;color:#9ca3af;letter-spacing:0.2px;width:1000px;text-align:center;">UPTIME</div>
<div class="t" style="left:1779.4px;top:1246.2px;font-size:27px;color:#fafafa;letter-spacing:-0.3px;width:1000px;text-align:center;">—</div>
<div class="r" style="left:2416.0px;top:1187.0px;width:243.0px;height:107.5px;background:#121212;border-radius:14px;"></div>
<div class="t" style="left:2037.5px;top:1207.9px;font-size:23.5px;color:#9ca3af;letter-spacing:0.2px;width:1000px;text-align:center;">API</div>
<div class="t" style="left:2035.0px;top:1246.2px;font-size:27px;color:#fafafa;letter-spacing:-0.3px;width:1000px;text-align:center;">:3111</div>
<div class="r" style="left:2673.0px;top:1187.0px;width:243.9px;height:107.5px;background:#121212;border-radius:14px;"></div>
<div class="t" style="left:2294.9px;top:1207.9px;font-size:23.5px;color:#9ca3af;letter-spacing:0.2px;width:1000px;text-align:center;">WS</div>
<div class="t" style="left:2292.4px;top:1246.2px;font-size:27px;color:#fafafa;letter-spacing:-0.3px;width:1000px;text-align:center;">:3112</div>
</body></html>
